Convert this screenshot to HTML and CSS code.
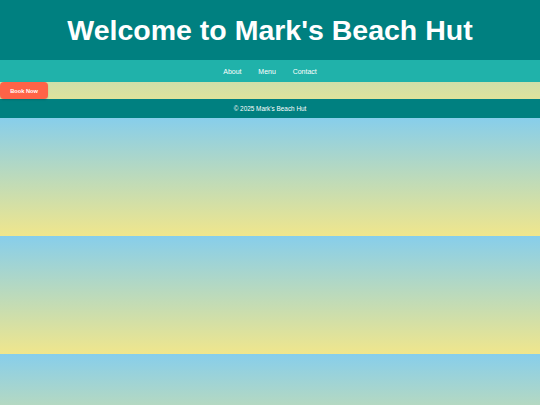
FILE: index.html
```html
<!DOCTYPE html>
<html lang="en">
<head>
<meta charset="utf-8">
<title>Mark's Beach Hut</title>
<link rel="stylesheet" href="styles.css">
</head>
<body>
<header class="site-header">
  <h1 class="title">Welcome to Mark's Beach Hut</h1>
</header>
<nav class="site-nav">
  <a href="#about">About</a>
  <a href="#menu">Menu</a>
  <a href="#contact">Contact</a>
</nav>
<main class="content">
  <button class="book-btn" type="button">Book Now</button>
</main>
<footer class="site-footer">
  <p>&copy; 2025 Mark's Beach Hut</p>
</footer>
</body>
</html>
```

FILE: styles.css
```css
body {
  margin: 0;
  font-family: "Liberation Sans", Arial, sans-serif;
  background: linear-gradient(to bottom, #87ceeb, #f0e68c);
}

.site-header {
  background: #008080;
  color: #ffffff;
  text-align: center;
}

.title {
  margin: 0;
  font-size: 28.5px;
  font-weight: bold;
  line-height: 61px;
  height: 60px;
}

.site-nav {
  background: #20b2aa;
  display: flex;
  justify-content: center;
  align-items: center;
  height: 22.3px;
  font-size: 7px;
}

.site-nav a {
  color: #ffffff;
  text-decoration: none;
  margin: 0 8.4px;
}

.content {
  display: flex;
}

.book-btn {
  background: #ff6347;
  color: #ffffff;
  border: none;
  border-radius: 4px;
  font-family: "Liberation Sans", Arial, sans-serif;
  font-weight: bold;
  font-size: 5.7px;
  height: 17px;
  padding: 0 10.2px;
  white-space: nowrap;
  box-shadow: 0 1px 2px rgba(0, 0, 0, 0.15);
}

.site-footer {
  background: #008080;
  color: #ffffff;
  text-align: center;
  height: 18.6px;
  display: flex;
  align-items: center;
  justify-content: center;
  font-size: 6.4px;
}

.site-footer p {
  margin: 0;
}
```
